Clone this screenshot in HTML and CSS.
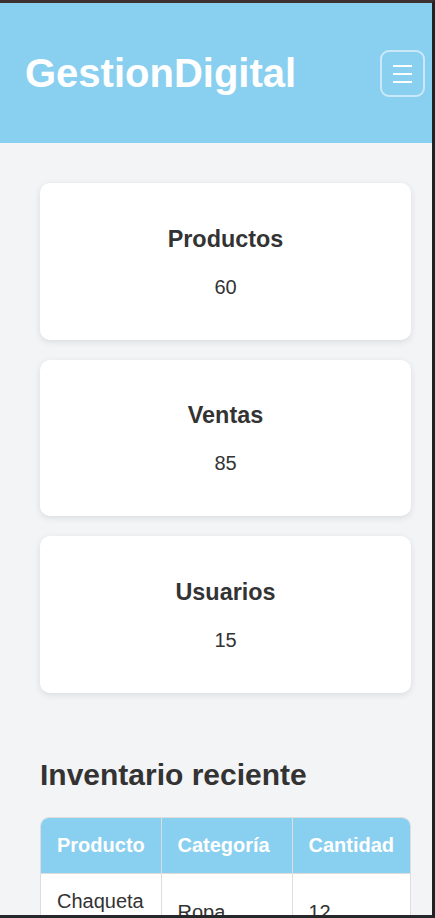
FILE: index.html
```html
<!DOCTYPE html>
<html lang="es">
<head>
<meta charset="utf-8">
<title>GestionDigital</title>
<link rel="stylesheet" href="styles.css">
</head>
<body>
<div class="window">
  <header class="topbar">
    <h1 class="brand">GestionDigital</h1>
    <button class="menu-btn" aria-label="Menú">
      <span class="bar"></span>
      <span class="bar"></span>
      <span class="bar"></span>
    </button>
  </header>
  <main class="content">
    <section class="stats">
      <div class="card">
        <h3 class="card-title">Productos</h3>
        <p class="card-value">60</p>
      </div>
      <div class="card">
        <h3 class="card-title">Ventas</h3>
        <p class="card-value">85</p>
      </div>
      <div class="card">
        <h3 class="card-title">Usuarios</h3>
        <p class="card-value">15</p>
      </div>
    </section>
    <section class="inventory">
      <h2 class="section-title">Inventario reciente</h2>
      <div class="table-wrap">
        <table class="inv-table">
          <thead>
            <tr>
              <th class="col-prod">Producto</th>
              <th class="col-cat">Categoría</th>
              <th class="col-qty">Cantidad</th>
            </tr>
          </thead>
          <tbody>
            <tr>
              <td>Chaqueta de cuero</td>
              <td>Ropa</td>
              <td>12</td>
            </tr>
            <tr>
              <td>Zapatillas deportivas</td>
              <td>Calzado</td>
              <td>30</td>
            </tr>
          </tbody>
        </table>
      </div>
    </section>
  </main>
</div>
</body>
</html>
```

FILE: styles.css
```css
* { box-sizing: border-box; }

html, body {
  margin: 0;
  padding: 0;
  background: #202124;
}

body {
  font-family: "Liberation Sans", Arial, sans-serif;
  color: #333333;
}

.window {
  height: 918px;
  overflow: hidden;
  border-top: 3px solid #3d3131;
  border-right: 3px solid #202124;
  border-bottom: 3px solid #26272a;
  background: #f3f4f6;
}

.topbar {
  height: 140px;
  background: #89cff0;
  display: flex;
  align-items: center;
  justify-content: space-between;
  padding: 0 7px 0 25px;
}

.brand {
  margin: 0;
  color: #ffffff;
  font-size: 40px;
  font-weight: bold;
  line-height: 46px;
}

.menu-btn {
  width: 45px;
  height: 47px;
  margin-top: 1px;
  padding: 0;
  background: transparent;
  border: 2px solid rgba(255, 255, 255, 0.55);
  border-radius: 9px;
  display: flex;
  flex-direction: column;
  align-items: center;
  justify-content: center;
  gap: 6px;
}

.bar {
  display: block;
  width: 19px;
  height: 2px;
  background: #ffffff;
}

.content {
  padding: 40px 21px 0 40px;
}

.stats {
  display: flex;
  flex-direction: column;
  gap: 20px;
}

.card {
  background: #ffffff;
  border-radius: 10px;
  box-shadow: 0 2px 7px rgba(0, 0, 0, 0.1);
  height: 156.5px;
  padding: 42.5px 20px 0;
  text-align: center;
}

.card-title {
  margin: 0 0 23px;
  font-size: 23.4px;
  line-height: 27px;
  font-weight: bold;
  color: #333333;
}

.card-value {
  margin: 0;
  font-size: 20px;
  line-height: 23px;
  color: #333333;
}

.inventory {
  padding-top: 65px;
}

.section-title {
  margin: 0 0 25px;
  font-size: 30px;
  line-height: 34px;
  font-weight: bold;
  color: #333333;
}

.table-wrap {
  border: 1px solid #dddddd;
  border-radius: 9px;
  overflow: hidden;
  background: #ffffff;
}

.inv-table {
  width: 100%;
  border-collapse: collapse;
  table-layout: fixed;
}

.col-prod { width: 120px; }
.col-cat { width: 131px; }
.col-qty { width: 118px; }

.inv-table th,
.inv-table td {
  padding: 16px 17px 16px 16px;
  font-size: 20px;
  line-height: 23px;
  text-align: left;
  vertical-align: middle;
  border-left: 1px solid #dddddd;
  border-bottom: 1px solid #dddddd;
}

.inv-table th:first-child,
.inv-table td:first-child {
  border-left: none;
}

.inv-table th {
  background: #89cff0;
  color: #ffffff;
  font-weight: bold;
}

.inv-table td {
  color: #333333;
}
```
